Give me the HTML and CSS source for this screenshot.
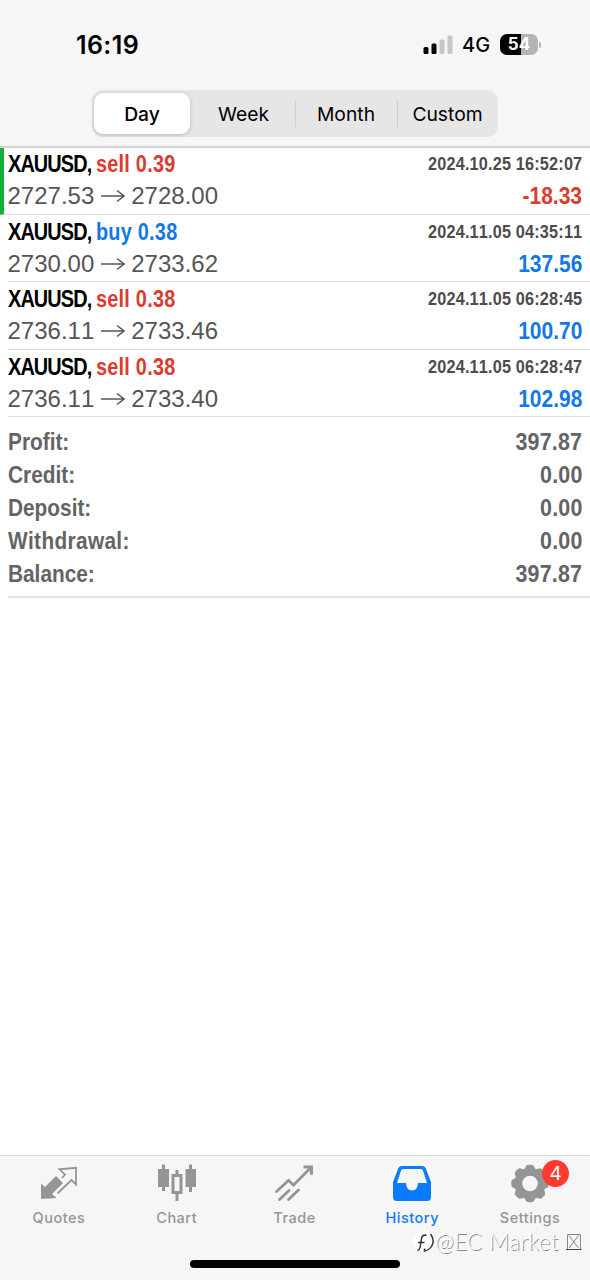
FILE: index.html
```html
<!DOCTYPE html>
<html lang="en">
<head>
    <meta charset="UTF-8">
    <title>History</title>
    <meta name="viewport" content="width=device-width, initial-scale=1">
    <link rel="stylesheet" href="styles.css">
</head>
<body>

<header>
    <div class="status-bar">
        <span class="clock">16:19</span>
        <div class="status-right">
            <svg class="signal" width="30" height="20" viewBox="0 0 30 20">
                <rect x="0.5" y="12" width="5" height="7" rx="1.5"/>
                <rect x="8.5" y="8.5" width="5" height="10.5" rx="1.5"/>
                <rect class="off" x="16.5" y="4.5" width="5" height="14.5" rx="1.5"/>
                <rect class="off" x="24.5" y="0.5" width="5" height="18.5" rx="1.5"/>
            </svg>
            <span class="network">4G</span>
            <div class="battery">54</div>
            <span class="battery-tip"></span>
        </div>
    </div>
    <nav class="segments">
        <a class="active">Day</a>
        <a>Week</a>
        <a>Month</a>
        <a>Custom</a>
    </nav>
</header>

<main>
    <section class="deal marked">
        <div class="line">
            <span class="symbol">XAUUSD, <b class="sell">sell 0.39</b></span>
            <span class="date">2024.10.25 16:52:07</span>
        </div>
        <div class="line">
            <span class="price">2727.53 <svg class="arrow" viewBox="0 0 24 14"><path d="M0 7H23M16 1.5L23 7L16 12.5"/></svg> 2728.00</span>
            <span class="amount sell">-18.33</span>
        </div>
    </section>
    <section class="deal">
        <div class="line">
            <span class="symbol">XAUUSD, <b class="buy">buy 0.38</b></span>
            <span class="date">2024.11.05 04:35:11</span>
        </div>
        <div class="line">
            <span class="price">2730.00 <svg class="arrow" viewBox="0 0 24 14"><path d="M0 7H23M16 1.5L23 7L16 12.5"/></svg> 2733.62</span>
            <span class="amount buy">137.56</span>
        </div>
    </section>
    <section class="deal">
        <div class="line">
            <span class="symbol">XAUUSD, <b class="sell">sell 0.38</b></span>
            <span class="date">2024.11.05 06:28:45</span>
        </div>
        <div class="line">
            <span class="price">2736.11 <svg class="arrow" viewBox="0 0 24 14"><path d="M0 7H23M16 1.5L23 7L16 12.5"/></svg> 2733.46</span>
            <span class="amount buy">100.70</span>
        </div>
    </section>
    <section class="deal">
        <div class="line">
            <span class="symbol">XAUUSD, <b class="sell">sell 0.38</b></span>
            <span class="date">2024.11.05 06:28:47</span>
        </div>
        <div class="line">
            <span class="price">2736.11 <svg class="arrow" viewBox="0 0 24 14"><path d="M0 7H23M16 1.5L23 7L16 12.5"/></svg> 2733.40</span>
            <span class="amount buy">102.98</span>
        </div>
    </section>

    <section class="summary">
        <div><span class="label">Profit:</span><span class="total">397.87</span></div>
        <div><span class="label">Credit:</span><span class="total">0.00</span></div>
        <div><span class="label">Deposit:</span><span class="total">0.00</span></div>
        <div><span class="label wide">Withdrawal:</span><span class="total">0.00</span></div>
        <div><span class="label">Balance:</span><span class="total">397.87</span></div>
    </section>
</main>

<footer>
    <nav class="tabs">
        <a>
            <svg width="40" height="40" viewBox="0 0 40 40">
                <path class="fill" d="M2 36V20.500L6 24L17 13L24 20L13 31L17.500 35Z"/>
                <path class="stroke" d="M23 15L26 11.500L20.500 6.300L37 4.800V21.500L32.500 17L18.500 30.500"/>
            </svg>
            Quotes
        </a>
        <a>
            <svg width="40" height="40" viewBox="0 0 40 40">
                <path class="fill" d="M1 6H5V1.500H8V6H12V24H8V28H5V24H1ZM28.500 6H32V1.500H35V6H39V24H35V29H32V24H28.500Z"/>
                <path class="fill" d="M14.500 11H18.500V7H21.500V11H25.500V31H21.500V38H18.500V31H14.500ZM17.500 14V28H22.500V14Z" fill-rule="evenodd"/>
            </svg>
            Chart
        </a>
        <a>
            <svg width="40" height="40" viewBox="0 0 40 40">
                <path class="stroke thick" d="M2.500 28.500L14.500 17.500L19.500 22L36 5.500M5.500 36.500L15 27.500M14.500 36.500L24.500 27"/>
                <path class="fill" d="M29.500 2.500H39V11.500L36 12V5.500H29.500Z"/>
            </svg>
            Trade
        </a>
        <a class="active">
            <svg width="40" height="40" viewBox="0 0 40 40">
                <path class="fill" fill-rule="evenodd" d="M10 3H30Q33 3 34 6L39 19V34Q39 38 35 38H5Q1 38 1 34V19L6 6Q7 3 10 3ZM11 6Q9.500 6 9 7.500L5 20H14Q14.500 27.500 20 27.500Q25.500 27.500 26 20H35L31 7.500Q30.500 6 29 6Z"/>
            </svg>
            History
        </a>
        <a>
            <svg width="40" height="40" viewBox="0 0 40 40">
                <circle class="ring" cx="20" cy="20.500" r="11.700"/>
                <g class="fill">
                    <path id="tooth" d="M13.500 8L15.800 3.500Q16.700 1.800 18.200 1.800H21.800Q23.300 1.800 24.200 3.500L26.500 8Z"/>
                    <use href="#tooth" transform="rotate(45 20 20.500)"/>
                    <use href="#tooth" transform="rotate(90 20 20.500)"/>
                    <use href="#tooth" transform="rotate(135 20 20.500)"/>
                    <use href="#tooth" transform="rotate(180 20 20.500)"/>
                    <use href="#tooth" transform="rotate(225 20 20.500)"/>
                    <use href="#tooth" transform="rotate(270 20 20.500)"/>
                    <use href="#tooth" transform="rotate(315 20 20.500)"/>
                </g>
            </svg>
            Settings
            <span class="badge">4</span>
        </a>
    </nav>
    <div class="home-bar"></div>
    <div class="watermark">
        <svg width="22" height="24" viewBox="0 0 22 24">
            <circle cx="10" cy="11" r="10" fill="#fff"/>
            <path d="M4.500 20.500Q7 20 7.500 15L8.500 8.500Q9.500 4 13.500 5.500M5 12.500H11.500" fill="none" stroke="#333" stroke-width="1.500"/>
            <path d="M17.500 4Q22 10 19 15.500Q16.500 20 11.500 21V18.500" fill="none" stroke="#333" stroke-width="1.500"/>
        </svg>
        <span>@EC Market</span>
        <svg class="box" width="16" height="18" viewBox="0 0 16 18">
            <path d="M1.500 16V1.500H14.500V16M3 2.500L12.500 15M12.500 2.500L3 15"/>
            <path class="edge" d="M0 16.500H15.500"/>
        </svg>
    </div>
</footer>

</body>
</html>
```

FILE: styles.css
```css
* {
    box-sizing: border-box;
}
body {
    margin: 0;
    height: 1280px;
    display: flex;
    flex-direction: column;
    background: #fff;
    color: #000;
    font-family: Inter, sans-serif;
    overflow: hidden;
}
header {
    height: 148px;
    background: #f6f6f6;
    border-bottom: 2px solid #d2d2d2;
}
.status-bar {
    height: 90px;
    padding: 0 49px 1px 76px;
    display: flex;
    justify-content: space-between;
    align-items: center;
}
.clock {
    font-size: 25px;
    font-weight: 600;
    letter-spacing: 0.4px;
}
.status-right {
    display: flex;
    align-items: center;
}
.signal .off {
    fill: #c6c6c6;
}
.network {
    width: 30px;
    margin: 0 8px 0 9px;
    font-size: 20px;
    font-weight: 500;
}
.battery {
    width: 38px;
    height: 21px;
    border-radius: 7px;
    background: linear-gradient(to right, #000 54%, #b4b4b4 54%);
    color: #fff;
    font-size: 17px;
    font-weight: 700;
    line-height: 21px;
    text-align: center;
}
.battery-tip {
    width: 2px;
    height: 6px;
    margin-left: 1px;
    border-radius: 0 2px 2px 0;
    background: #b4b4b4;
}

/* period switch */
.segments {
    width: 406px;
    height: 47px;
    margin: 0 auto;
    padding: 3px 0 3px 2px;
    display: grid;
    grid-template-columns: 96px 105px 102px 1fr;
    border-radius: 11px;
    background: #e6e6e7;
}
.segments a {
    display: flex;
    align-items: center;
    justify-content: center;
    font-size: 19.3px;
}
.segments .active {
    border-radius: 9px;
    background: #fff;
    font-weight: 500;
    box-shadow: 0 1px 4px rgba(0, 0, 0, 0.2);
}
.segments a:nth-child(2) {
    padding-left: 2px;
}
.segments a:nth-child(n+3) {
    position: relative;
}
.segments a:nth-child(n+3)::before {
    content: "";
    position: absolute;
    left: 0;
    width: 1px;
    height: 27px;
    background: #cfcfd0;
}

/* deals */
main {
    flex: 1;
    font-family: "Liberation Sans", sans-serif;
    font-kerning: none;
}
.deal {
    height: 67.5px;
    margin-left: 8px;
    padding: 1px 8px 0 0;
    border-bottom: 1px solid #dedede;
}
.deal.marked {
    height: 66.5px;
    margin-left: 0;
    padding-top: 0;
    padding-left: 4px;
    border-left: 4px solid #16b038;
}
.line {
    height: 32px;
    display: flex;
    justify-content: space-between;
    align-items: center;
    white-space: nowrap;
}
/* condensed bold look */
.symbol {
    transform: scaleX(0.812);
    transform-origin: left;
}
.label {
    margin-left: -0.5px;
    transform: scaleX(0.85);
    transform-origin: left;
}
.date {
    transform: scaleX(0.87);
    transform-origin: right;
}
.amount, .total {
    transform: scaleX(0.875);
    transform-origin: right;
}
.symbol {
    margin-left: -0.5px;
    font-size: 24.5px;
    font-weight: 700;
    letter-spacing: -1.1px;
}
.symbol b {
    letter-spacing: 0.3px;
}
.date {
    color: #4c4c4e;
    font-size: 18.7px;
    font-weight: 700;
    letter-spacing: 0.2px;
    margin-right: -0.2px;
}
.price {
    display: flex;
    align-items: center;
    margin-left: -0.5px;
    color: #555;
    font-size: 24px;
}
.arrow {
    width: 24px;
    height: 14px;
    margin: 0 6px 0 7px;
    fill: none;
    stroke: #555;
    stroke-width: 1.5;
}
.amount {
    font-size: 24px;
    font-weight: 700;
}
.sell {
    color: #dc3b30;
}
.buy {
    color: #1278e8;
}
.summary {
    height: 181px;
    margin-left: 8px;
    padding: 8px 8px 0 0;
    border-bottom: 2px solid #e4e4e4;
    color: #646464;
    font-size: 24.5px;
    font-weight: 700;
}
.summary div {
    height: 33px;
    display: flex;
    justify-content: space-between;
    align-items: center;
}
.wide {
    letter-spacing: 0.4px;
}
.total {
    letter-spacing: 0.2px;
    margin-right: -0.2px;
}

/* bottom tabs */
footer {
    position: relative;
    height: 125px;
    background: #f6f6f6;
    border-top: 1px solid #d4d4d4;
}
.tabs {
    display: grid;
    grid-template-columns: repeat(5, 117.8px);
    padding-top: 7px;
}
.tabs a {
    position: relative;
    display: flex;
    flex-direction: column;
    align-items: center;
    gap: 6px;
    color: #959595;
    font-size: 14.5px;
    font-weight: 500;
    letter-spacing: 0.5px;
    line-height: 18px;
}
.tabs .active {
    color: #0a7aff;
}
.fill {
    fill: currentColor;
}
.stroke {
    fill: none;
    stroke: currentColor;
    stroke-width: 1.8;
}
.thick {
    stroke-width: 2.8;
    stroke-linecap: round;
}
.ring {
    fill: none;
    stroke: currentColor;
    stroke-width: 7.8;
}
.badge {
    position: absolute;
    top: -3px;
    left: 71px;
    width: 27px;
    height: 27px;
    border-radius: 50%;
    background: #ff3b30;
    color: #fff;
    font-size: 19px;
    font-weight: 400;
    letter-spacing: 0;
    line-height: 27px;
    text-align: center;
}
.home-bar {
    position: absolute;
    left: 190px;
    bottom: 12px;
    width: 210px;
    height: 8px;
    border-radius: 4px;
    background: #000;
}
.watermark {
    position: absolute;
    left: 413px;
    top: 74px;
    display: flex;
    align-items: center;
    color: #fff;
    font-family: Lato, sans-serif;
    font-size: 22.5px;
    font-weight: 300;
    letter-spacing: 0.25px;
    line-height: 24px;
    white-space: nowrap;
    text-shadow: 1px 1px 0 #888;
}
.box {
    margin-left: 8px;
    fill: none;
    stroke: #888;
    stroke-width: 1;
}
.box .edge {
    stroke: #444;
}
```
